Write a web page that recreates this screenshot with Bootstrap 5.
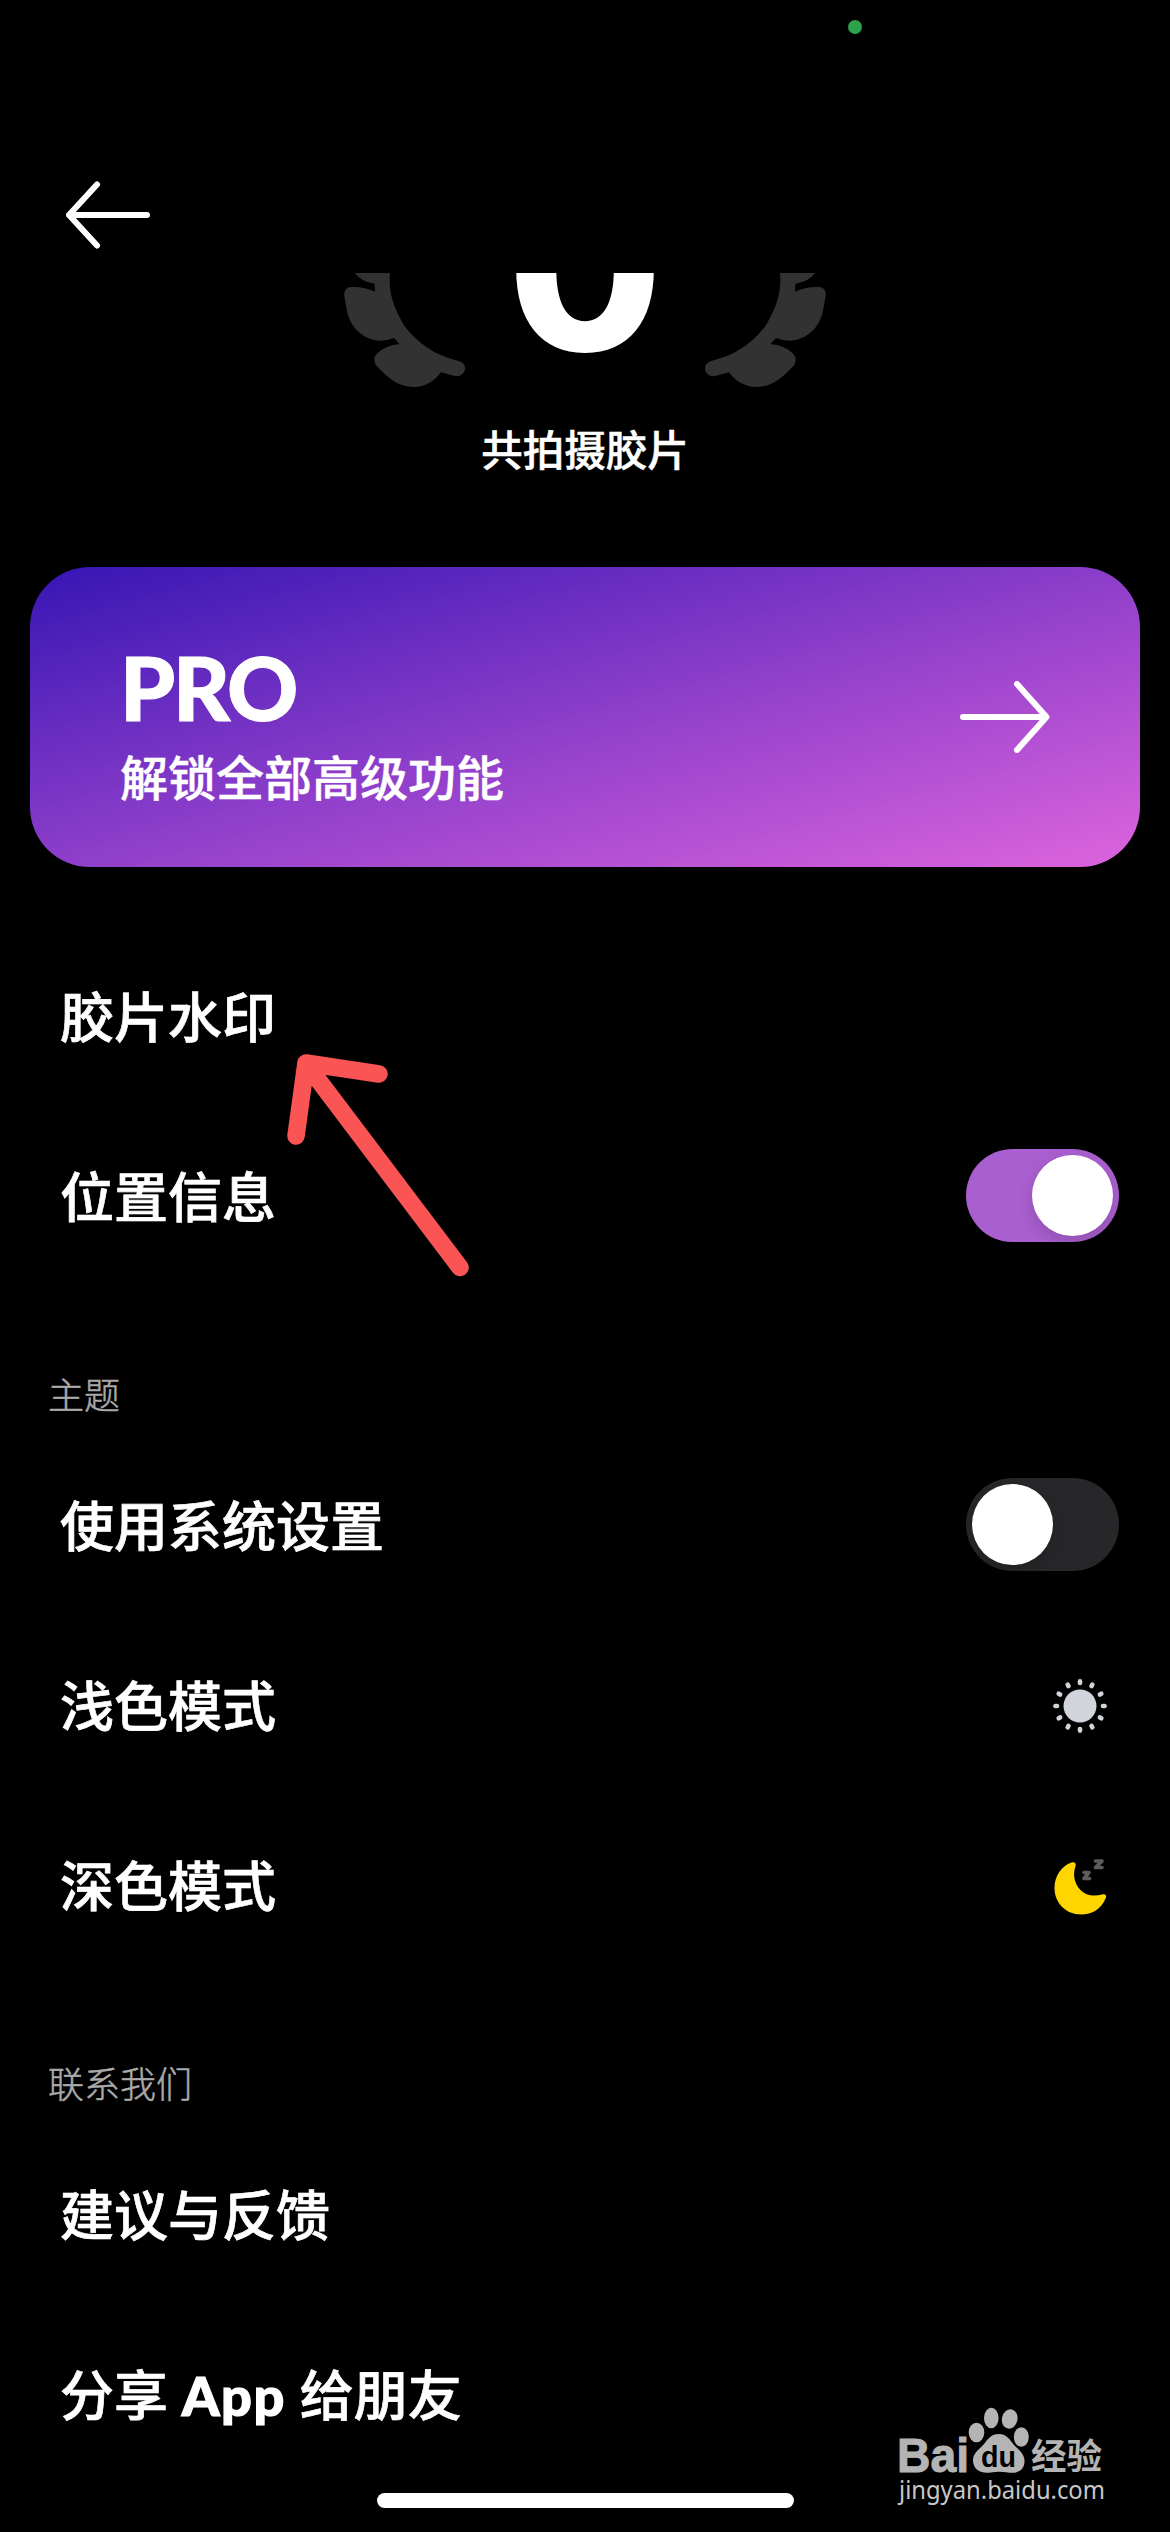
<!DOCTYPE html>
<html lang="zh-CN" data-bs-theme="dark">
<head>
<meta charset="utf-8">
<meta name="viewport" content="width=device-width, initial-scale=1">
<title>设置</title>
<link href="https://cdn.jsdelivr.net/npm/bootstrap@5.3.0/dist/css/bootstrap.min.css" rel="stylesheet">
<style>
  body { background: #000; color: #fff; font-family: Lato, "Noto Sans CJK SC", sans-serif; overflow: hidden; }
  .screen { width: 1170px; height: 2532px; overflow: hidden; }
  .status { height: 157px; padding: 20px 308px 0 0; }
  .cam-dot { width: 14px; height: 14px; background: #2ea14b; }
  .topbar { height: 116px; padding: 23px 60px 0; }
  .hero { height: 117px; }
  .zero { left: 50%; bottom: 8px; transform: translateX(-50%); font: 800 225px/1 Inter, sans-serif; }
  .zero-clip { height: 117px; }
  .caption { height: 177px; font-size: 41.5px; font-weight: 500; line-height: 120px; -webkit-text-stroke: .5px #fff; }
  .pro { margin: 0 30px; height: 300px; padding: 0 90px 0 90px; border-radius: 60px; background: linear-gradient(to bottom right, #3615b4, #8d3eca 50%, #dd64dd); }
  .pro-copy { padding-top: 20px; }
  .pro-title { font-weight: 900; font-size: 88px; line-height: 90px; letter-spacing: -2.2px; -webkit-text-stroke: 1px #fff; }
  .pro-sub { font-size: 48px; font-weight: 500; line-height: 70px; margin-top: 11px; -webkit-text-stroke: .5px #fff; }
  .setting { height: 180px; padding: 0 51px 0 60px; font-size: 54px; font-weight: 500; -webkit-text-stroke: .7px #fff; }
  .setting b { font-weight: 900; letter-spacing: 1.6px; -webkit-text-stroke: 1.2px #fff; }
  .sec-label { padding-left: 48px; margin-top: 82px; height: 67px; font-size: 36px; font-weight: 300; color: #aaa; line-height: 53px; -webkit-text-stroke: .5px #aaa; }
  .toggle { width: 153px; height: 93px; padding: 6px; margin-bottom: 3px; background: #27272a; }
  .toggle.on { background: #aa5fd0; }
  .knob { width: 81px; height: 81px; background: #fff; box-shadow: 0 6px 16px rgba(0,0,0,.16); }
  .icon-slot { margin-right: 6px; }
  .pointer { left: 280px; top: 1040px; }
  .mark-logo { left: 890px; top: 2400px; }
  .home-bar { left: 377px; top: 2493px; width: 417px; height: 15px; background: #fff; }
</style>
<script src="https://cdn.jsdelivr.net/npm/bootstrap@5.3.0/dist/js/bootstrap.bundle.min.js"></script>
</head>
<body>
<div class="screen position-relative d-flex flex-column">
  <div class="status d-flex justify-content-end flex-shrink-0"><span class="cam-dot rounded-circle"></span></div>
  <header class="topbar flex-shrink-0">
    <svg width="96" height="70" viewBox="60 180 96 70" fill="none" stroke="#fff" stroke-width="6" stroke-linecap="round" stroke-linejoin="round"><path d="M147 215H69M97 184.500L69 215L97 245.500"/></svg>
  </header>
  <div class="hero position-relative flex-shrink-0">
    <svg class="d-block mx-auto" width="530" height="117" viewBox="0 23 530 117" fill="#323232">
      <defs><path id="wing" d="M103 69H207C203 115 210 160 248 225C290 283 345 318 408 332A23 23 0 0 1 403 379C385 376 372 370 358 367Q325 411 278 411C230 411 200 383 165 345Q155 325 168 311Q195 285 235 282L219 264Q200 272 180 272C125 271 88 228 80 183L71 133Q73 112 92 111Q130 109 163 125L161 101Q122 95 103 69Z"/></defs>
      <g transform="scale(.338 .3333)"><use href="#wing"/><use href="#wing" transform="translate(1568 0) scale(-1 1)"/></g>
    </svg>
    <div class="zero-clip position-absolute top-0 start-0 w-100 overflow-hidden"><span class="zero position-absolute">0</span></div>
  </div>
  <div class="caption text-center flex-shrink-0">共拍摄胶片</div>

  <div class="pro d-flex align-items-center justify-content-between flex-shrink-0">
    <div class="pro-copy">
      <div class="pro-title">PRO</div>
      <div class="pro-sub">解锁全部高级功能</div>
    </div>
    <svg width="90" height="72" viewBox="960 681 90 72" fill="none" stroke="#fff" stroke-width="6" stroke-linecap="round" stroke-linejoin="round"><path d="M963 717H1046M1017 684L1046.500 717L1017 750"/></svg>
  </div>

  <main class="d-flex flex-column flex-shrink-0" style="padding-top:60px">
    <div class="setting d-flex align-items-center">胶片水印</div>
    <div class="setting d-flex align-items-center justify-content-between"><span>位置信息</span><span class="toggle on rounded-pill d-flex justify-content-end"><span class="knob rounded-circle"></span></span></div>
    <div class="sec-label">主题</div>
    <div class="setting d-flex align-items-center justify-content-between"><span>使用系统设置</span><span class="toggle rounded-pill d-flex"><span class="knob rounded-circle"></span></span></div>
    <div class="setting d-flex align-items-center justify-content-between"><span>浅色模式</span>
      <svg class="icon-slot" width="66" height="66" viewBox="-33 -33 66 66" fill="#d1d4da" stroke="#d1d4da">
        <circle r="16.500" stroke="none"/>
        <g stroke-width="4.600" stroke-linecap="round"><path id="ray" d="M0 -24.600V-23"/><use href="#ray" transform="rotate(30)"/><use href="#ray" transform="rotate(60)"/><use href="#ray" transform="rotate(90)"/><use href="#ray" transform="rotate(120)"/><use href="#ray" transform="rotate(150)"/><use href="#ray" transform="rotate(180)"/><use href="#ray" transform="rotate(210)"/><use href="#ray" transform="rotate(240)"/><use href="#ray" transform="rotate(270)"/><use href="#ray" transform="rotate(300)"/><use href="#ray" transform="rotate(330)"/></g>
      </svg>
    </div>
    <div class="setting d-flex align-items-center justify-content-between"><span>深色模式</span>
      <svg class="icon-slot" width="66" height="66" viewBox="0 0 66 66">
        <path fill="#ffd500" d="M24.500 9.500C28 8.500 29.500 11 28.500 13.500C26 20 26.500 29 33 36.500C39 43 47 43.500 55 41.500C58 40.500 60 42 58.800 45C54.500 56 45 61.500 34 61.500C19 61.500 7.500 50 7.500 35C7.500 23 14.500 13 24.500 9.500Z"/>
        <g fill="none" stroke="#5c5c5e" stroke-width="3.600" stroke-linecap="round" stroke-linejoin="round"><path d="M37 19.500H42L37 25.500H42.500"/><path d="M48.500 8H55L48.500 14.500H55"/></g>
      </svg>
    </div>
    <div class="sec-label">联系我们</div>
    <div class="setting d-flex align-items-center">建议与反馈</div>
    <div class="setting d-flex align-items-center"><span>分享 <b>App</b> 给朋友</span></div>
  </main>

  <svg class="pointer position-absolute" width="200" height="245" viewBox="280 1040 200 245" fill="none" stroke="#fb5454" stroke-width="17.500" stroke-linecap="round" stroke-linejoin="round"><path d="M296 1136L306 1063L379 1074M307 1065L460 1267.500"/></svg>

  <svg class="mark-logo position-absolute" width="230" height="115" viewBox="890 2400 230 115" fill="#b4b4b4">
    <text x="897" y="2471.500" stroke="#b4b4b4" stroke-width="1" font-family="Liberation Sans, sans-serif" font-weight="700" font-size="48" textLength="72" lengthAdjust="spacingAndGlyphs">Bai</text>
    <ellipse cx="976.500" cy="2432.500" rx="7.800" ry="9.800"/><ellipse cx="991.300" cy="2418" rx="7.300" ry="10.300"/><ellipse cx="1009.700" cy="2419" rx="7.800" ry="9.800" transform="rotate(12 1009.700 2419)"/><ellipse cx="1021.300" cy="2437" rx="7.500" ry="9.800"/>
    <path d="M999 2434C1007 2434 1010 2440 1014 2445C1019 2450 1025 2454 1024.500 2462C1024 2471 1016 2474 1008 2472.500Q999 2471 991 2472.500C981 2474 973.500 2470 973 2461C972.500 2453 980 2449 984 2444C988 2439 991 2434 999 2434Z"/>
    <text x="981" y="2467" fill="#000" font-family="Liberation Sans, sans-serif" font-weight="700" font-size="29" textLength="35" lengthAdjust="spacingAndGlyphs">du</text>
    <text x="1031" y="2468.500" font-family="Noto Sans CJK SC, sans-serif" font-weight="700" font-size="35" textLength="71" lengthAdjust="spacingAndGlyphs">经验</text>
    <text x="899" y="2499" fill="#c8c8c8" font-family="Noto Sans, sans-serif" font-size="24.500" textLength="206" lengthAdjust="spacingAndGlyphs">jingyan.baidu.com</text>
  </svg>
  <div class="home-bar position-absolute rounded-pill"></div>
</div>
</body>
</html>
